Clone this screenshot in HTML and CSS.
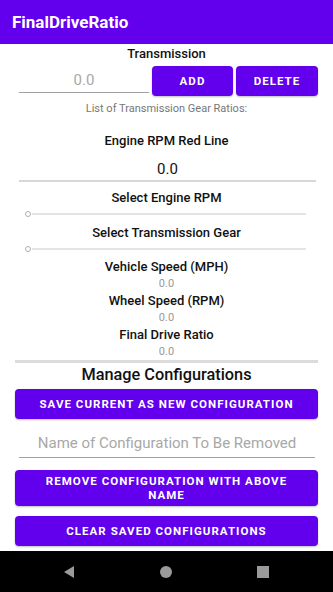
FILE: index.html
```
<!DOCTYPE html>
<html lang="en">
<head>
<meta charset="utf-8">
<title>FinalDriveRatio</title>
<link rel="stylesheet" href="styles.css">
</head>
<body>
<div class="screen">
  <header class="appbar">FinalDriveRatio</header>
  <main class="content">
    <div class="label title-trans">Transmission</div>
    <div class="trans-row">
      <div class="field field-gear"><span class="hint">0.0</span></div>
      <button class="btn btn-add">ADD</button>
      <button class="btn btn-delete">DELETE</button>
    </div>
    <div class="small-label list-label">List of Transmission Gear Ratios:</div>
    <div class="label rpm-label">Engine RPM Red Line</div>
    <div class="field field-rpm"><span class="value">0.0</span></div>
    <div class="label sel-label sel-first">Select Engine RPM</div>
    <div class="slider"><span class="thumb"></span><span class="track"></span></div>
    <div class="label sel-label sel-second">Select Transmission Gear</div>
    <div class="slider"><span class="thumb"></span><span class="track"></span></div>
    <div class="label out-label out-first">Vehicle Speed (MPH)</div>
    <div class="out-value">0.0</div>
    <div class="label out-label">Wheel Speed (RPM)</div>
    <div class="out-value">0.0</div>
    <div class="label out-label">Final Drive Ratio</div>
    <div class="out-value">0.0</div>
    <div class="divider"></div>
    <div class="section-title">Manage Configurations</div>
    <button class="btn btn-wide btn-save">SAVE CURRENT AS NEW CONFIGURATION</button>
    <div class="field field-name"><span class="hint">Name of Configuration To Be Removed</span></div>
    <button class="btn btn-wide btn-remove">REMOVE CONFIGURATION WITH ABOVE NAME</button>
    <button class="btn btn-wide btn-clear">CLEAR SAVED CONFIGURATIONS</button>
  </main>
  <nav class="navbar">
    <svg class="nav-icon" width="14" height="14" viewBox="0 0 14 14"><polygon points="12,1 12,13 2,7" fill="#9a9a9a"/></svg>
    <svg class="nav-icon" width="14" height="14" viewBox="0 0 14 14"><circle cx="7" cy="7" r="6" fill="#9a9a9a"/></svg>
    <svg class="nav-icon" width="14" height="14" viewBox="0 0 14 14"><rect x="1" y="1" width="12" height="12" fill="#9a9a9a"/></svg>
  </nav>
</div>
</body>
</html>
```
FILE: styles.css
```
* { box-sizing: border-box; }
html, body { margin: 0; padding: 0; }
body {
  font-family: Roboto, "Noto Sans", "Liberation Sans", sans-serif;
  background: #ffffff;
  color: #1a1a1a;
}
.screen {
  width: 333px;
  height: 592px;
  display: flex;
  flex-direction: column;
  overflow: hidden;
}
.appbar {
  height: 44px;
  flex: none;
  background: #6200ee;
  color: #ffffff;
  font-size: 17px;
  font-weight: 700;
  line-height: 44px;
  padding-left: 12px;
}
.content {
  flex: 1;
  display: flex;
  flex-direction: column;
}
.label {
  text-align: center;
  font-size: 13px;
  font-weight: 500;
  color: #111;
  line-height: 16px;
}
.title-trans { padding-top: 2px; height: 18px; }
.trans-row {
  display: flex;
  margin-top: 4px;
  height: 30px;
  padding-left: 19px;
}
.field {
  border-bottom: 1px solid #a0a0a0;
  text-align: center;
}
.field-gear {
  width: 130px;
  height: 27px;
  font-size: 15px;
  line-height: 28px;
}
.hint { color: #a8a8a8; }
.value { color: #111; }
.btn {
  border: none;
  background: #6200ee;
  color: #ffffff;
  font-family: Roboto, "Noto Sans", "Liberation Sans", sans-serif;
  font-size: 11.5px;
  font-weight: 700;
  letter-spacing: 0.09em;
  border-radius: 4px;
  box-shadow: 0 1px 2px rgba(0,0,0,0.25);
  padding: 0;
}
.btn-add { width: 81px; margin-left: 3px; height: 30px; }
.btn-delete { width: 82px; margin-left: 3px; height: 30px; }
.small-label {
  text-align: center;
  font-size: 11px;
  color: #777;
  line-height: 14px;
}
.list-label { margin-top: 6px; }
.rpm-label { margin-top: 17px; }
.field-rpm {
  margin: 4px 17px 0 19px;
  height: 29px;
  font-size: 15px;
  padding-top: 3px;
  line-height: 26px;
  border-bottom-color: #d8d8d8;
  border-bottom-width: 2px;
}
.sel-first { margin-top: 8px; }
.sel-second { margin-top: 3px; }
.slider {
  height: 16px;
  display: flex;
  align-items: center;
  padding-left: 25px;
}
.thumb {
  width: 6px;
  height: 6px;
  border: 1.3px solid #b0b0b0;
  border-radius: 50%;
  flex: none;
}
.track {
  width: 274px;
  height: 2px;
  background: #e4e4e4;
  margin-left: 1px;
}
.out-label { margin-top: 1px; }
.out-first { margin-top: 2px; }
.out-value {
  text-align: center;
  font-size: 11px;
  color: #999;
  line-height: 17px;
}
.out-value:last-of-type { line-height: 16px; }
.divider {
  margin: 0 15px;
  height: 3px;
  background: #dcdcdc;
  flex: none;
}
.section-title {
  text-align: center;
  font-size: 16.3px;
  font-weight: 500;
  color: #111;
  line-height: 22px;
  margin-top: 1px;
}
.btn-wide {
  margin: 0 15px;
  width: 303px;
  height: 30px;
  line-height: 14px;
  flex: none;
}
.btn-save { margin-top: 3px; }
.field-name {
  margin: 9px 18px 0 19px;
  height: 30px;
  font-size: 15px;
  line-height: 30px;
  border-bottom-color: #a0a0a0;
}
.btn-remove { margin-top: 12px; height: 36px; padding: 0 20px; }
.btn-clear { margin-top: 10px; }
.navbar {
  height: 41px;
  flex: none;
  background: #000;
  display: flex;
  align-items: center;
  padding: 0 0 0 62px;
}
.nav-icon { flex: none; }
.nav-icon + .nav-icon { margin-left: 83px; }
```
